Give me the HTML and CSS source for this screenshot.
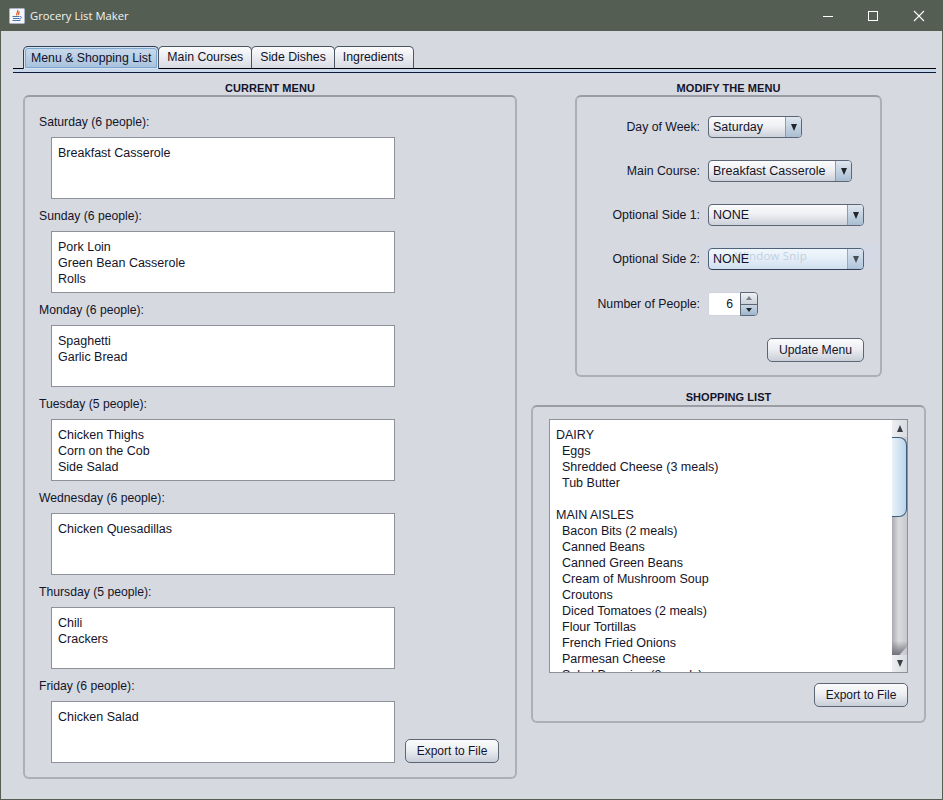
FILE: index.html
```html
<!DOCTYPE html>
<html lang="en">
<head>
<meta charset="utf-8">
<title>Grocery List Maker</title>
<link rel="stylesheet" href="styles.css">
</head>
<body>
<div class="window">
  <header class="titlebar">
    <svg class="app-icon" width="16" height="16" viewBox="0 0 16 16">
      <rect x="0.5" y="0.5" width="15" height="15" rx="1" fill="#f4f6fa" stroke="#aab4c6"/>
      <path d="M8.5 2C10 4 6.5 5 8 7.5M10.5 3.5C9.5 5 9 5.5 9.8 7" fill="none" stroke="#e2541c" stroke-width="1.2"/>
      <path d="M3.5 8.5h7M4 10.5h6.5M3.5 12.5h8M11 8.5c2 0 2 2-.5 2.5" fill="none" stroke="#4a76b0" stroke-width="1"/>
    </svg>
    <span class="title">Grocery List Maker</span>
    <div class="controls">
      <svg width="46" height="30" viewBox="0 0 46 30"><path d="M19 15.5h10" stroke="#fff" stroke-width="1"/></svg>
      <svg width="46" height="30" viewBox="0 0 46 30"><rect x="18.5" y="10.5" width="9" height="9" fill="none" stroke="#fff"/></svg>
      <svg width="46" height="30" viewBox="0 0 46 30"><path d="M18 10l10 10M28 10L18 20" stroke="#fff" stroke-width="1.1"/></svg>
    </div>
  </header>
  <div class="content">
    <nav class="tabs">
      <div class="tab active"><span>Menu &amp; Shopping List</span></div>
      <div class="tab"><span>Main Courses</span></div>
      <div class="tab"><span>Side Dishes</span></div>
      <div class="tab"><span>Ingredients</span></div>
    </nav>
    <div class="tab-rule"></div>
    <main class="columns">
      <section class="left">
        <h2>CURRENT MENU</h2>
        <div class="panel menu-panel">
          <div class="days">
            <div class="day"><p>Saturday (6 people):</p><div class="box">Breakfast Casserole</div></div>
            <div class="day"><p>Sunday (6 people):</p><div class="box">Pork Loin<br>Green Bean Casserole<br>Rolls</div></div>
            <div class="day"><p>Monday (6 people):</p><div class="box">Spaghetti<br>Garlic Bread</div></div>
            <div class="day"><p>Tuesday (5 people):</p><div class="box">Chicken Thighs<br>Corn on the Cob<br>Side Salad</div></div>
            <div class="day"><p>Wednesday (6 people):</p><div class="box">Chicken Quesadillas</div></div>
            <div class="day"><p>Thursday (5 people):</p><div class="box">Chili<br>Crackers</div></div>
            <div class="day"><p>Friday (6 people):</p><div class="box">Chicken Salad</div></div>
          </div>
          <button class="btn export-left">Export to File</button>
        </div>
      </section>
      <section class="right">
        <div class="modify">
          <h2>MODIFY THE MENU</h2>
          <div class="panel modify-panel">
            <div class="form-row"><label>Day of Week:</label><div class="combo w94"><span>Saturday</span><i><b></b></i></div></div>
            <div class="form-row"><label>Main Course:</label><div class="combo w144"><span>Breakfast Casserole</span><i><b></b></i></div></div>
            <div class="form-row"><label>Optional Side 1:</label><div class="combo w156"><span>NONE</span><i><b></b></i></div></div>
            <div class="form-row"><label>Optional Side 2:</label><div class="combo w156 focus"><span>NONE</span><i><b></b></i><div class="snip"></div></div></div>
            <div class="form-row spin-row"><label>Number of People:</label>
              <div class="spinner"><span>6</span><div class="spin-btns"><i class="up"><b></b></i><i class="down"><b></b></i></div></div>
            </div>
            <div class="update-row"><button class="btn update">Update Menu</button></div>
          </div>
        </div>
        <div class="shopping">
          <h2>SHOPPING LIST</h2>
          <div class="panel shop-panel">
            <div class="listbox">
              <div class="list-text">
                <div>DAIRY</div>
                <div class="ind">Eggs</div>
                <div class="ind">Shredded Cheese (3 meals)</div>
                <div class="ind">Tub Butter</div>
                <div class="gap"></div>
                <div>MAIN AISLES</div>
                <div class="ind">Bacon Bits (2 meals)</div>
                <div class="ind">Canned Beans</div>
                <div class="ind">Canned Green Beans</div>
                <div class="ind">Cream of Mushroom Soup</div>
                <div class="ind">Croutons</div>
                <div class="ind">Diced Tomatoes (2 meals)</div>
                <div class="ind">Flour Tortillas</div>
                <div class="ind">French Fried Onions</div>
                <div class="ind">Parmesan Cheese</div>
                <div class="ind">Salad Dressing (2 meals)</div>
              </div>
              <div class="scrollbar">
                <div class="arrow-btn"><b class="tri-up"></b></div>
                <div class="track"><div class="thumb"></div></div>
                <div class="arrow-btn"><b class="tri-down"></b></div>
              </div>
            </div>
            <div class="export-row"><button class="btn export-right">Export to File</button></div>
          </div>
        </div>
      </section>
    </main>
  </div>
</div>
</body>
</html>
```
FILE: styles.css
```css
* { box-sizing: border-box; }
html, body { margin: 0; padding: 0; }
body { width: 943px; height: 800px; overflow: hidden; font-family: "Liberation Sans", Arial, sans-serif; font-size: 12.2px; color: #14142a; }
.window { width: 943px; height: 800px; display: flex; flex-direction: column; background: #d6d9e0; border: 1px solid #555e52; border-top: 0; }
.titlebar { height: 31px; flex: none; background: #555e52; display: flex; align-items: center; padding-left: 8px; color: #fff; }
.app-icon { flex: none; }
.title { margin-left: 5px; font-family: "Open Sans", sans-serif; font-size: 11.25px; color: #f2f3f1; }
.controls { margin-left: auto; display: flex; }
.controls svg { display: block; }
.content { flex: 1; padding: 15px 0 0 12px; position: relative; }
.tabs { display: flex; height: 22px; padding-left: 10px; position: relative; z-index: 1; font-size: 12.3px; }
.tab { height: 22px; border: 1px solid #4a5565; border-bottom: 0; border-radius: 5px 5px 0 0; padding: 3px 8px 0; margin-left: -1px; background: linear-gradient(#fcfcfd, #d8dbe3); color: #111128; line-height: 15px; }
.tab:last-child { padding-right: 9px; }
.tab.active { margin-left: 0; padding: 1px; height: 23px; border-color: #2b3f58; background: #d6e2ef; }
.tab.active span { display: block; height: 20px; padding: 2px 5px 0; border: 1px solid #7ba6d0; border-radius: 3px 3px 0 0; background: linear-gradient(#c9d9ea, #a9c3dd); }
.tab-rule { height: 5px; width: 923px; border-top: 1px solid #000; border-bottom: 1px solid #0b1a38; background: #c9d7ea; }
.columns { display: flex; padding-top: 8px; margin-left: 10px; }
h2 { margin: 0; text-align: center; font-size: 11px; font-weight: 700; line-height: 14px; letter-spacing: .05px; color: #14142a; }
.left { width: 494px; flex: none; }
.panel { border: 2px solid #acafb6; border-top-color: #9a9da4; border-radius: 6px; background: #d6d9e0; }
.menu-panel { height: 684px; position: relative; padding: 18px 0 0 14px; }
.days { display: flex; flex-direction: column; gap: 10px; }
.day p { margin: 0; line-height: 14px; height: 14px; }
.box { margin: 8px 0 0 12px; width: 344px; height: 62px; background: #fff; border: 1px solid #8e919a; padding: 7px 6px 0; line-height: 16px; font-size: 12.5px; }
.btn { height: 24px; border: 1px solid #5c6675; border-radius: 5px; background: linear-gradient(#fbfbfc 0%, #eceef2 45%, #c9ced8 100%); font: 12px "Liberation Sans", Arial, sans-serif; color: #14142a; padding: 0; display: block; }
.export-left { position: absolute; left: 380px; top: 642px; width: 94px; }
.right { width: 395px; margin-left: 14px; flex: none; }
.modify { width: 307px; margin-left: 44px; }
.modify-panel { height: 282px; padding: 19px 16px 0 0; }
.form-row { display: flex; align-items: center; height: 22px; margin-bottom: 22px; }
.form-row label { width: 123px; text-align: right; margin-right: 8px; flex: none; font-size: 12.3px; }
.combo { position: relative; height: 22px; border: 1px solid #5c6675; border-radius: 4px; background: linear-gradient(#fbfbfc 0%, #eef0f3 45%, #ccd0d9 100%); display: flex; align-items: center; padding-left: 4px; font-size: 12.5px; }
.combo span { position: relative; z-index: 1; }
.combo i { position: absolute; right: 0; top: 0; bottom: 0; width: 16px; border-left: 1px solid #8b9bb0; border-radius: 0 3px 3px 0; background: linear-gradient(#dfe6ef, #a9bed3); display: flex; align-items: center; justify-content: center; }
.combo b { display: block; width: 0; height: 0; border-left: 3.5px solid transparent; border-right: 3.5px solid transparent; border-top: 7px solid #20262c; }
.w94 { width: 94px; }
.w144 { width: 144px; }
.w156 { width: 156px; }
.focus { background: linear-gradient(#fbfdff 0%, #edf4fa 45%, #d3e0ee 100%); border-color: #2e3f57; }
.snip { position: absolute; left: -3px; top: -4px; width: 172px; height: 23px; background: rgba(205,225,245,.22); pointer-events: none; }
.snip::after { content: "Window Snip"; position: absolute; left: 29px; top: 3px; font: 11.5px/16px "Open Sans", sans-serif; color: #c3cfdc; letter-spacing: .2px; }
.spin-row { margin-top: 0; height: 24px; margin-bottom: 0; }
.spinner { width: 50px; height: 24px; display: flex; border: 1px solid #d0d3da; border-radius: 2px; background: #fff; }
.spinner span { flex: 1; text-align: right; padding-right: 7px; line-height: 22px; }
.spin-btns { width: 18px; flex: none; display: flex; flex-direction: column; margin: -1px -1px -1px 0; border: 1px solid #5c6675; border-radius: 0 4px 4px 0; overflow: hidden; }
.spin-btns i { flex: 1; display: flex; align-items: center; justify-content: center; }
.spin-btns .up { background: linear-gradient(#eef0f4, #ccd1da); border-bottom: 1px solid #5c6675; }
.spin-btns .down { background: linear-gradient(#c9d6e4, #9fb6cd); }
.spin-btns b { display: block; width: 0; height: 0; border-left: 3px solid transparent; border-right: 3px solid transparent; border-top: 4px solid #20262c; }
.spin-btns .up b { border-top: 0; border-bottom: 4px solid #7a808a; }
.update-row { display: flex; justify-content: flex-end; margin-top: 22px; }
.update { width: 97px; font-size: 12.2px; }
.shopping { margin-top: 13px; }
.shopping h2 { margin-bottom: 1px; }
.shop-panel { width: 395px; height: 318px; padding: 12px 0 0 16px; }
.listbox { height: 254px; width: 359px; border: 1px solid #8e919a; background: #fff; display: flex; }
.list-text { flex: 1; overflow: hidden; white-space: nowrap; padding: 7px 6px 0; line-height: 16px; font-size: 12.5px; }
.ind { padding-left: 6px; }
.gap { height: 16px; }
.scrollbar { width: 15px; flex: none; display: flex; flex-direction: column; background: linear-gradient(90deg, #a9abb0, #d9dbdf 45%, #c6c8cd); }
.arrow-btn { height: 17px; display: flex; align-items: center; justify-content: center; background: linear-gradient(90deg, #eceef1, #d9dbe0); }
.tri-up { width: 0; height: 0; border-left: 3.5px solid transparent; border-right: 3.5px solid transparent; border-bottom: 7px solid #3a3f46; }
.tri-down { width: 0; height: 0; border-left: 3.5px solid transparent; border-right: 3.5px solid transparent; border-top: 7px solid #3a3f46; }
.track { flex: 1; position: relative; }
.track::after { content: ""; position: absolute; left: 0; right: 0; bottom: 0; height: 14px; background: linear-gradient(transparent, #6f7177); clip-path: polygon(0 0, 100% 0, 100% 40%, 50% 100%, 0 100%); }
.thumb { position: absolute; left: 0; top: 0; width: 15px; height: 80px; border: 1px solid #3f5b78; border-left: 0; border-radius: 0 8px 8px 0; background: linear-gradient(90deg, #e8f1f9, #bcd5ea); }
.export-row { display: flex; justify-content: flex-end; margin-top: 10px; width: 359px; }
.export-right { width: 94px; }
```
